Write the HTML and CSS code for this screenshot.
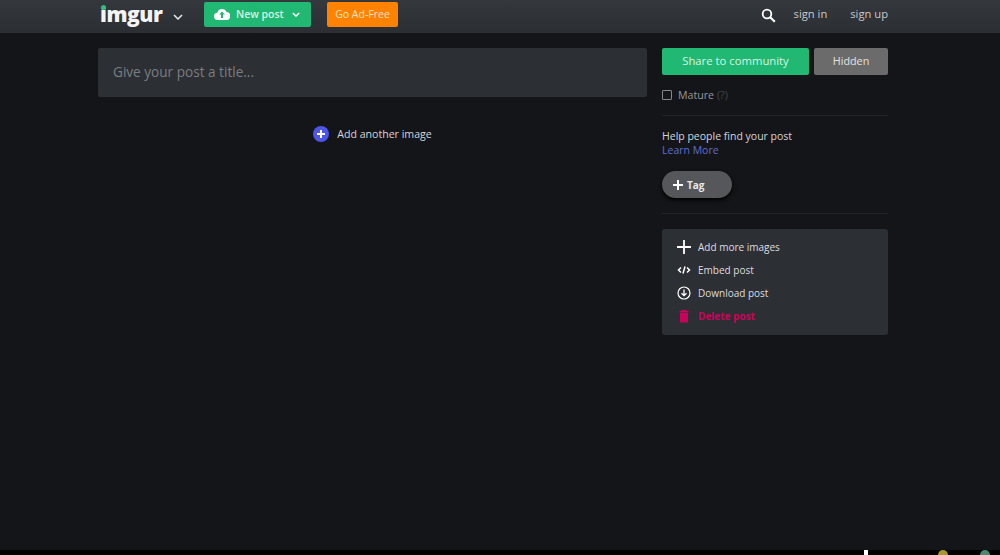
FILE: index.html
```html
<!DOCTYPE html>
<html lang="en">
<head>
    <meta charset="UTF-8">
    <meta name="viewport" content="width=device-width, initial-scale=1.0">
    <title>Imgur - New post</title>
    <link rel="stylesheet" href="styles.css">
</head>
<body>
<!-- Navigation -->
<header class="topbar">
    <div class="logo-wrap">
        <span class="logo">imgur<span class="logo-dot"></span></span>
        <svg class="chevron" width="10" height="6" viewBox="0 0 10 6"><path d="M1 1l4 4 4-4" fill="none" stroke="#fff" stroke-width="1.5"/></svg>
    </div>
    <button class="new-post">
        <svg width="16" height="12" viewBox="0 0 16 12"><path d="M4 12a3.6 3.6 0 0 1-.6-7.2A4.8 4.8 0 0 1 12.500 4a4 4 0 0 1-.5 8z" fill="#fff"/><path d="M8 3.500L5.200 6.500H7V10h2V6.500h1.800z" fill="#20b872"/></svg>
        <span>New post</span>
        <svg width="8" height="5" viewBox="0 0 10 6"><path d="M1 1l4 4 4-4" fill="none" stroke="#fff" stroke-width="1.800"/></svg>
    </button>
    <button class="ad-free">Go Ad-Free</button>
    <div class="nav-right">
        <svg width="15" height="15" viewBox="0 0 15 15"><circle cx="6" cy="6" r="4.300" fill="none" stroke="#fff" stroke-width="1.800"/><path d="M9.200 9.200l4.600 4.600" stroke="#fff" stroke-width="2.200"/></svg>
        <a class="sign-in" href="#">sign in</a>
        <a class="sign-up" href="#">sign up</a>
    </div>
</header>

<main class="page">
    <section class="editor">
        <div class="title-box">Give your post a title...</div>
        <div class="add-image">
            <span class="add-icon">
                <svg width="10" height="10" viewBox="0 0 10 10"><path d="M5 1v8M1 5h8" stroke="#fff" stroke-width="2"/></svg>
            </span>
            Add another image
        </div>
    </section>

    <aside class="sidebar">
        <div class="share-row">
            <button class="share">Share to community</button>
            <button class="hidden-btn">Hidden</button>
        </div>
        <div class="mature">
            <span class="checkbox"></span>
            Mature <span class="hint">(?)</span>
        </div>
        <div class="tags">
            <p class="help">Help people find your post</p>
            <a class="learn" href="#">Learn More</a>
            <button class="tag">
                <svg width="10" height="10" viewBox="0 0 10 10"><path d="M5 0v10M0 5h10" stroke="#fff" stroke-width="2"/></svg>
                Tag
            </button>
        </div>
        <ul class="actions">
            <li>
                <svg width="14" height="14" viewBox="0 0 14 14"><path d="M7 0v14M0 7h14" stroke="#fff" stroke-width="1.800"/></svg>
                Add more images
            </li>
            <li>
                <svg width="14" height="10" viewBox="0 0 14 10"><path d="M4 2.500L1.500 5 4 7.500M10 2.500L12.500 5 10 7.500M8 1.500L6 8.500" fill="none" stroke="#fff" stroke-width="1.500"/></svg>
                Embed post
            </li>
            <li>
                <svg width="14" height="14" viewBox="0 0 14 14"><circle cx="7" cy="7" r="6" fill="none" stroke="#fff" stroke-width="1.200"/><path d="M7 3.500v6M4.500 7.200L7 9.700l2.500-2.500" fill="none" stroke="#fff" stroke-width="1.300"/></svg>
                Download post
            </li>
            <li class="delete">
                <svg width="14" height="14" viewBox="0 0 14 14"><path d="M2.500 2h9v1.500h-9zM3 4h8v9.500H3zM4.500 1h5v1h-5z" fill="#c9045c"/></svg>
                Delete post
            </li>
        </ul>
    </aside>
</main>

<!-- Bottom strip, cut off by the window -->
<footer class="strip">
    <span class="tray tray-white"></span>
    <span class="tray tray-yellow"></span>
    <span class="tray tray-green"></span>
</footer>
</body>
</html>
```

FILE: styles.css
```css
* {
    box-sizing: border-box;
}

html, body {
    height: 100%;
}

body {
    margin: 0;
    display: flex;
    flex-direction: column;
    overflow: hidden;
    background-color: #141518;
    color: #dcdde0;
    font-family: "Open Sans", "Noto Sans", sans-serif;
    font-size: 11px;
}

button {
    border: none;
    font-family: inherit;
    color: #fff;
}

a {
    text-decoration: none;
}

/* Navigation */
.topbar {
    flex: none;
    height: 33px;
    padding-left: 100px;
    display: flex;
    align-items: center;
    background: linear-gradient(#34373c, #2b2e33);
}

.logo-wrap {
    display: flex;
    align-items: center;
    width: 104px;
}

.logo {
    position: relative;
    width: 73px;
    margin-top: -5px;
    color: #f4f4f4;
    font-size: 21px;
    font-weight: 800;
    letter-spacing: -0.4px;
}

.logo-dot {
    position: absolute;
    left: 1px;
    top: 5px;
    width: 5px;
    height: 5px;
    background-color: #2fbf7a;
    border-radius: 50%;
}

.chevron {
    opacity: 0.9;
}

.new-post {
    width: 107px;
    height: 25px;
    margin-top: -5px;
    padding: 0 0 0 10px;
    display: flex;
    align-items: center;
    background-color: #20b872;
    border-radius: 2px;
    font-size: 10.500px;
    font-weight: 600;
}

.new-post span {
    margin: 0 8px 0 6px;
    color: #d5f5e4;
}

.ad-free {
    width: 71px;
    height: 25px;
    margin: -5px 0 0 16px;
    padding: 0 0 1px;
    background-color: #ff8200;
    border-radius: 2px;
    color: #fbe3c5;
    font-size: 10.500px;
}

.nav-right {
    margin-left: auto;
    margin-right: 112px;
    display: flex;
    align-items: center;
}

.nav-right svg {
    margin-top: -2px;
}

.nav-right a {
    color: #c8c9cc;
    font-size: 11.200px;
    margin-top: -7px;
}

.sign-in {
    margin-left: 18px;
}

.sign-up {
    margin-left: 23px;
}

/* Page */
.page {
    flex: 1;
    padding: 15px 0 0 98px;
    display: flex;
    gap: 15px;
    align-items: flex-start;
}

.editor {
    width: 549px;
}

.title-box {
    height: 49px;
    padding: 0 0 2px 15px;
    display: flex;
    align-items: center;
    background-color: #2c2f33;
    border-radius: 2px;
    color: #7b7d82;
    font-size: 13.600px;
}

.add-image {
    margin-top: 29px;
    display: flex;
    justify-content: center;
    align-items: center;
    gap: 8px;
    color: #d4d5d8;
    font-size: 10.600px;
}

.add-icon {
    width: 16px;
    height: 16px;
    display: flex;
    justify-content: center;
    align-items: center;
    background-color: #4e56e8;
    border-radius: 50%;
}

.sidebar {
    width: 226px;
}

.share-row {
    display: flex;
    gap: 5px;
}

.share {
    width: 147px;
    height: 27px;
    padding: 0 0 2px;
    background-color: #20b872;
    border-radius: 2px;
    color: #d5f5e4;
    font-size: 11.300px;
}

.hidden-btn {
    width: 74px;
    height: 27px;
    padding: 0 0 2px;
    background-color: #6b6b6b;
    border-radius: 2px;
    color: #e2e2e2;
    font-size: 10.800px;
}

.mature {
    height: 41px;
    display: flex;
    align-items: center;
    gap: 6px;
    border-bottom: 1px solid #222428;
    color: #95979b;
    font-size: 10.600px;
}

.checkbox {
    width: 10px;
    height: 10px;
    border: 1px solid #85878b;
    border-radius: 1px;
}

.hint {
    margin-left: -3px;
    color: #44464a;
}

.tags {
    height: 98px;
    padding-top: 13px;
    border-bottom: 1px solid #222428;
}

.help {
    margin: 0;
    color: #d4d5d8;
    font-size: 10.500px;
    line-height: 14px;
}

.learn {
    display: block;
    color: #5f6dd0;
    font-size: 10.500px;
    line-height: 15px;
}

.tag {
    width: 70px;
    height: 27px;
    margin-top: 13px;
    padding: 0 0 0 11px;
    display: flex;
    align-items: center;
    gap: 4px;
    background-color: #55575b;
    border-radius: 14px;
    box-shadow: 0 2px 4px #000;
    color: #e8e8e8;
    font-size: 10px;
    font-weight: 700;
}

.actions {
    list-style-type: none;
    height: 106px;
    margin: 15px 0 0;
    padding: 6px 0 0 15px;
    background-color: #2c2f33;
    border-radius: 3px;
}

.actions li {
    height: 23px;
    display: flex;
    align-items: center;
    color: #dcdde0;
    font-size: 10px;
}

.actions svg {
    width: 14px;
    margin-right: 7px;
}

.actions .delete {
    color: #c9045c;
    font-weight: 700;
}

/* Bottom strip */
.strip {
    flex: none;
    height: 5px;
    display: flex;
    overflow: hidden;
    background-color: #000;
}

.tray {
    flex: none;
    border-radius: 50%;
}

.tray-white {
    width: 4px;
    height: 5px;
    margin-left: 864px;
    background-color: #fff;
    border-radius: 0;
}

.tray-yellow {
    width: 10px;
    height: 10px;
    margin-left: 70px;
    background-color: #a59a2a;
}

.tray-green {
    width: 10px;
    height: 10px;
    margin-left: 32px;
    background-color: #4a8a70;
}
```
